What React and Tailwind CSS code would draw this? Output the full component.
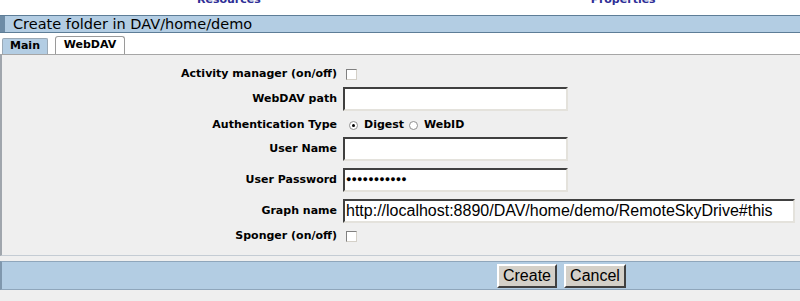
import React from 'react';

const labelFont = { fontFamily: '"DejaVu Sans", Verdana, sans-serif' };

// Small classic-looking checkbox
const Check = () => (
  <span className="inline-block w-[11px] h-[11px] bg-white border border-t-[#808080] border-l-[#808080] border-b-[#d4d0c8] border-r-[#d4d0c8]" />
);

// Small classic radio
const Radio = ({ checked }) => (
  <span className="relative inline-block w-[9px] h-[9px] rounded-full bg-white border border-[#909090]">
    {checked && <span className="absolute left-[2px] top-[2px] w-[3px] h-[3px] rounded-full bg-black" />}
  </span>
);

const TextBox = ({ width, value = '', password }) => (
  <div
    className={`${width} h-[24px] bg-white border-2 border-t-[#404040] border-l-[#404040] border-b-[#e4e2dc] border-r-[#e4e2dc] flex items-center px-[1px] overflow-hidden whitespace-nowrap`}
  >
    {password ? (
      <span className="text-[9px] text-black tracking-[0.1px] font-['Liberation_Sans',sans-serif]">{value}</span>
    ) : (
      <span className="text-[16px] text-black font-['Liberation_Sans',Arial,sans-serif] leading-none">{value}</span>
    )}
  </div>
);

const Row = ({ label, className, children }) => (
  <div className={`flex items-center ${className}`}>
    <div className="w-[335px] text-right text-[11px] font-bold text-black" style={labelFont}>
      {label}
    </div>
    <div className="pl-[6px] flex items-center">{children}</div>
  </div>
);

export default function App() {
  return (
    <div className="w-[800px] h-[301px] bg-white overflow-hidden flex flex-col">
      {/* cut-off top links */}
      <div className="h-[15px] overflow-hidden">
        <div className="flex -mt-[8px] text-[11px] font-bold text-[#2e2e96]" style={labelFont}>
          <span className="ml-[197px]">Resources</span>
          <span className="ml-[330px]">Properties</span>
        </div>
      </div>

      {/* title bar */}
      <div className="h-[18px] bg-[#b3cde3] border-y border-[#5d7d97] flex items-center">
        <div className="w-[5px] self-stretch bg-[#6e8ca6]" />
        <span className="pl-[8px] text-[14.5px] text-black leading-none" style={labelFont}>
          Create folder in DAV/home/demo
        </span>
      </div>

      {/* tabs */}
      <div className="h-[21px] flex items-end pl-[2px] gap-[7px] text-[11px] font-bold" style={labelFont}>
        <div className="h-[16px] w-[46px] bg-[#b3cde3] border border-b-0 border-[#9aa9b6] rounded-t-[2px] flex items-center justify-center">
          Main
        </div>
        <div className="h-[18px] w-[70px] bg-white border border-b-0 border-[#9a9a9a] rounded-t-[3px] flex items-center justify-center">
          WebDAV
        </div>
      </div>

      {/* panel */}
      <div className="bg-[#efefef] border-t border-[#a6a6a6] border-l-2 border-l-[#a0a6ad] border-b border-b-[#c4ccd4] pb-[9px] flex flex-col">
        <Row label="Activity manager (on/off)" className="mt-[9px] h-[20px]">
          <span className="ml-[3px] flex"><Check /></span>
        </Row>
        <Row label="WebDAV path" className="mt-[3px] h-[24px]">
          <TextBox width="w-[225px]" />
        </Row>
        <Row label="Authentication Type" className="mt-[3px] h-[22px]">
          <div className="flex items-center text-[11px] font-bold" style={labelFont}>
            <span className="ml-[6px] flex"><Radio checked /></span>
            <span className="ml-[6px]">Digest</span>
            <span className="ml-[5px] flex"><Radio /></span>
            <span className="ml-[6px]">WebID</span>
          </div>
        </Row>
        <Row label="User Name" className="mt-[1px] h-[24px]">
          <TextBox width="w-[225px]" />
        </Row>
        <Row label="User Password" className="mt-[7px] h-[24px]">
          <TextBox width="w-[225px]" value="●●●●●●●●●●●" password />
        </Row>
        <Row label="Graph name" className="mt-[7px] h-[24px]">
          <TextBox width="w-[452px]" value="http://localhost:8890/DAV/home/demo/RemoteSkyDrive#this" />
        </Row>
        <Row label="Sponger (on/off)" className="mt-[3px] h-[20px]">
          <span className="ml-[3px] flex"><Check /></span>
        </Row>
      </div>

      {/* footer */}
      <div className="flex-1 bg-[#efefef] pt-[5px]">
        <div className="h-[29px] bg-[#b3cde3] border-y border-[#8fa6bb] border-l-2 border-l-[#7f97ad] flex items-center pl-[495px] gap-[7px]">
          <button className="h-[24px] w-[60px] bg-[#d4d0c8] border-2 border-t-white border-l-white border-b-[#404040] border-r-[#404040] text-[16px] text-black font-['Liberation_Sans',Arial,sans-serif] leading-none">
            Create
          </button>
          <button className="h-[24px] w-[62px] bg-[#d4d0c8] border-2 border-t-white border-l-white border-b-[#404040] border-r-[#404040] text-[16px] text-black font-['Liberation_Sans',Arial,sans-serif] leading-none">
            Cancel
          </button>
        </div>
      </div>
    </div>
  );
}
